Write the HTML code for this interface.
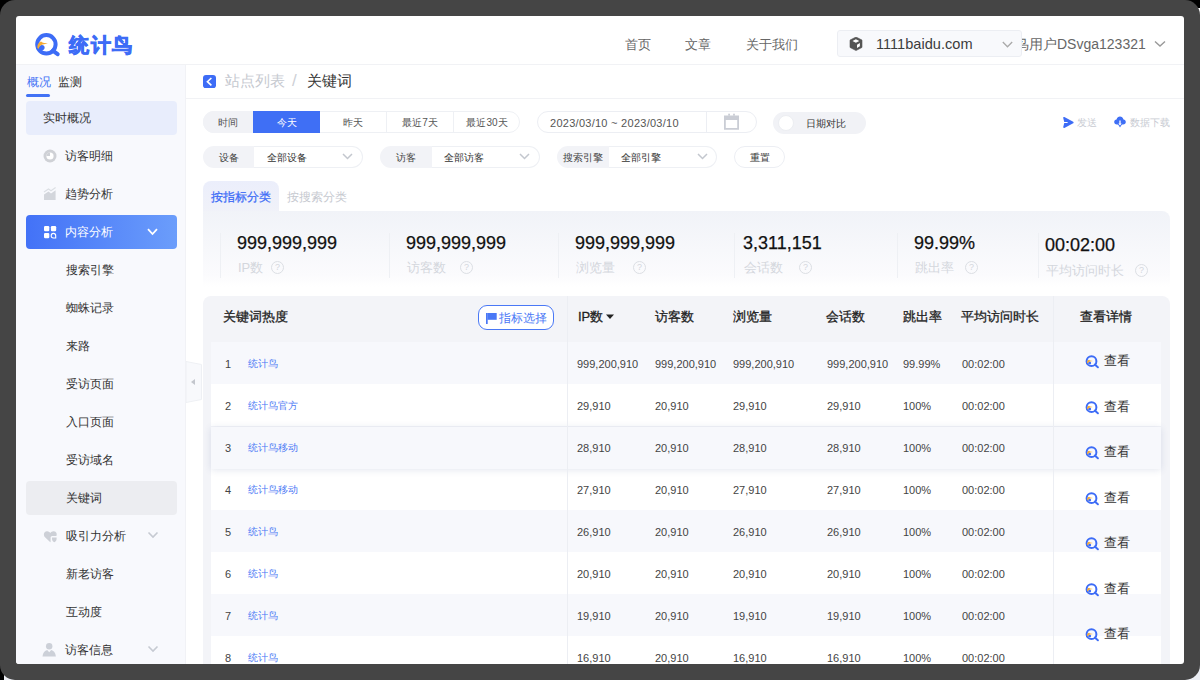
<!DOCTYPE html>
<html><head><meta charset="utf-8">
<style>
*{box-sizing:border-box;margin:0;padding:0}
html,body{width:1200px;height:680px;overflow:hidden;background:#000}
body{font-family:"Liberation Sans",sans-serif;color:#333;position:relative}
.a{position:absolute;white-space:nowrap}
#frame{position:absolute;left:0;top:0;width:1200px;height:680px;background:#454545;border-radius:15px}
#page{position:absolute;left:0;top:0;width:1200px;height:680px;clip-path:inset(16px round 3px);background:#fff}
.hline{position:absolute;height:1px;background:#f0f1f5}
.vline{position:absolute;width:1px;background:#eef0f4;z-index:2}
.nav{font-size:13px;color:#666;line-height:16px;top:37px}
.si{left:26px;width:151px;height:34px;border-radius:4px}
.st{font-size:12px;color:#333;line-height:16px}
.ico{position:absolute}
.seg{font-size:10px;line-height:23px;text-align:center;color:#555;top:111px;height:22px}
.lbl{font-size:10px;line-height:23px;color:#444;text-align:center;background:#f2f3f7;top:146px;height:22px}
.sel{font-size:11px;line-height:19px;color:#333;top:146px;height:22px;border:1px solid #eef0f4;border-left:none;border-radius:0 11px 11px 0;background:#fff}
.num{font-size:18px;line-height:20px;color:#111;top:233px;-webkit-text-stroke:0.25px #111}
.slab{font-size:13px;line-height:16px;color:#d4d7dd;top:260px}
.q{width:13px;height:13px;border:1px solid #dcdfe4;border-radius:50%;font-size:9px;line-height:11px;text-align:center;color:#d4d7dd}
.th{font-size:13px;line-height:18px;color:#222;top:308px;-webkit-text-stroke:0.3px #222}
.row{left:211px;width:950px;height:42px}
.td{font-size:11px;line-height:14px;color:#444}
.kw{color:#4d7af5}
.view{font-size:12.5px;line-height:16px;color:#333}
</style></head><body>
<div class="a" style="left:0;top:0;width:1200px;height:680px;background:#eceef4"></div><div class="a" style="left:0;top:0;width:24px;height:24px;background:#000"></div><div class="a" style="left:1176px;top:0;width:24px;height:8px;background:#000"></div><div class="a" style="left:1176px;top:8px;width:24px;height:16px;background:#fff"></div><div class="a" style="left:0;top:656px;width:4px;height:24px;background:#000"></div>
<div id="frame"></div>
<div id="page">
  <!-- header -->
  <div class="hline" style="left:16px;top:64px;width:1168px;background:#f1f2f5"></div>
  <svg class="ico" style="left:34px;top:32px" width="26" height="26" viewBox="0 0 26 26">
    <circle cx="12.4" cy="12.3" r="9.2" fill="none" stroke="#3d6cf6" stroke-width="4"/>
    <path d="M18.8 18.6 L23.6 22.2" stroke="#3d6cf6" stroke-width="4" stroke-linecap="round"/>
    <circle cx="7.9" cy="15.6" r="2.7" fill="#3d6cf6"/>
    <path d="M3.3 15.8 C3.2 12.6 4.6 10.2 7 9.6 L9 10.8 L14 11.4 L8.6 12.4 C6.8 12.8 5.4 14 4.4 17Z" fill="#f6ab35"/>
  </svg>
  <div class="a" style="left:69px;top:32px;font-size:20px;line-height:26px;font-weight:700;color:#3d6cf6;-webkit-text-stroke:0.8px #3d6cf6;letter-spacing:1.5px">统计鸟</div>
  <div class="a nav" style="left:625px">首页</div>
  <div class="a nav" style="left:685px">文章</div>
  <div class="a nav" style="left:746px">关于我们</div>
  <div class="a" style="left:1015px;top:36px;font-size:14px;line-height:16px;color:#666">鸟用户DSvga123321</div>
  <svg class="ico" style="left:1154px;top:40px" width="12" height="8" viewBox="0 0 12 8"><path d="M1 1.5 L6 6 L11 1.5" fill="none" stroke="#999" stroke-width="1.4"/></svg>
  <div class="a" style="left:837px;top:30px;width:185px;height:27px;border:1px solid #eceef3;border-radius:3px;background:#f8f9fc"></div>
  <svg class="ico" style="left:849px;top:37px" width="14" height="14" viewBox="0 0 14 14"><path d="M7 0 L13 3.1 L13 10.4 L7 13.6 L1 10.4 L1 3.1Z" fill="#555" stroke="#555" stroke-width="0.6" stroke-linejoin="round"/><path d="M6.9 2.2 L10.3 4 L6.9 5.8 L3.5 4Z" fill="#fff"/><path d="M8 7.7 L10.9 6.1 L10.9 9.3 L8 10.9Z" fill="#fff"/></svg>
  <div class="a" style="left:876px;top:35px;font-size:14.6px;line-height:18px;color:#3c3c3c">1111baidu.com</div>
  <svg class="ico" style="left:1002px;top:41px" width="11" height="7" viewBox="0 0 11 7"><path d="M0.8 1 L5.5 5.8 L10.2 1" fill="none" stroke="#aaa" stroke-width="1.3"/></svg>

  <!-- sidebar -->
  <div class="a" style="left:16px;top:65px;width:170px;height:600px;background:#f8f9fd;border-right:1px solid #f1f2f6"></div>
  <div class="a" style="left:27px;top:74px;font-size:12px;line-height:16px;color:#4272f5">概况</div>
  <div class="a" style="left:58px;top:74px;font-size:12px;line-height:16px;color:#333">监测</div>
  <div class="a" style="left:26px;top:94px;width:24px;height:2.5px;border-radius:2px;background:#4272f5"></div>
  <div class="a si" style="top:101px;background:#e8edfc"></div>
  <div class="a st" style="left:43px;top:110px">实时概况</div>
  <svg class="ico" style="left:43px;top:149px" width="14" height="14" viewBox="0 0 14 14"><circle cx="7" cy="7" r="6.5" fill="#cfd1d6"/><circle cx="7" cy="7" r="3.6" fill="#fff"/><path d="M7 3.4 A3.6 3.6 0 0 0 3.4 7 L7 7Z" fill="#cfd1d6"/></svg>
  <div class="a st" style="left:65px;top:148px">访客明细</div>
  <svg class="ico" style="left:43px;top:187px" width="14" height="14" viewBox="0 0 14 14"><path d="M1 7.6 L5.5 4.6 L8 6.4 L12.6 3.2 L12.6 13 L1 13Z" fill="#d3d6dc"/><path d="M1 5 L5.5 2 L8 3.8 L12.6 0.6" fill="none" stroke="#dcdfe4" stroke-width="1.2"/></svg>
  <div class="a st" style="left:65px;top:186px">趋势分析</div>
  <div class="a si" style="top:215px;background:linear-gradient(90deg,#4372f7,#6b9dfb)"></div>
  <svg class="ico" style="left:44px;top:226px" width="13" height="13" viewBox="0 0 13 13"><rect x="0" y="0" width="5.3" height="5.3" rx="1.2" fill="#fff"/><rect x="6.9" y="0" width="5.3" height="5.3" rx="1.2" fill="#fff"/><rect x="0" y="6.9" width="5.3" height="5.3" rx="1.2" fill="#fff"/><path d="M9.4 7.4 C10.9 7.4 11.7 8.2 11.7 9.7 L11.7 12 L9.4 12 C7.9 12 7.2 11.2 7.2 9.7 C7.2 8.2 7.9 7.4 9.4 7.4Z" fill="none" stroke="#fff" stroke-width="1.1"/></svg>
  <div class="a st" style="left:65px;top:224px;color:#fff">内容分析</div>
  <svg class="ico" style="left:147px;top:228px" width="11" height="8" viewBox="0 0 11 8"><path d="M1 1.2 L5.5 6 L10 1.2" fill="none" stroke="#fff" stroke-width="1.8"/></svg>
  <div class="a st" style="left:66px;top:262px">搜索引擎</div>
  <div class="a st" style="left:66px;top:300px">蜘蛛记录</div>
  <div class="a st" style="left:66px;top:338px">来路</div>
  <div class="a st" style="left:66px;top:376px">受访页面</div>
  <div class="a st" style="left:66px;top:414px">入口页面</div>
  <div class="a st" style="left:66px;top:452px">受访域名</div>
  <div class="a si" style="top:481px;background:#ecedf1"></div>
  <div class="a st" style="left:66px;top:490px">关键词</div>
  <svg class="ico" style="left:43px;top:530px" width="15" height="13" viewBox="0 0 15 13"><path d="M7.3 12.3 L2 7.2 C0.2 5.4 0.6 1.5 3.9 1.3 C5.4 1.2 6.5 2 7.3 3 C8.1 2 9.2 1.2 10.7 1.3 C13.7 1.5 14.2 4.3 13.4 6 L9.3 6 C8.2 6 7.6 6.8 7.6 7.8 L7.6 12Z" fill="#cdd0d7"/><path d="M9 7.5 L13.6 7.5 L13.6 9 C13.6 10.5 12.5 11.5 11.3 12.3 C10.1 11.5 9 10.5 9 9Z" fill="#cdd0d7"/></svg>
  <div class="a st" style="left:66px;top:528px">吸引力分析</div>
  <svg class="ico" style="left:147px;top:531px" width="12" height="8" viewBox="0 0 12 8"><path d="M1.5 1.5 L6 6 L10.5 1.5" fill="none" stroke="#c6cad2" stroke-width="1.6"/></svg>
  <div class="a st" style="left:66px;top:566px">新老访客</div>
  <div class="a st" style="left:66px;top:604px">互动度</div>
  <svg class="ico" style="left:42px;top:642px" width="15" height="15" viewBox="0 0 15 15"><circle cx="7.2" cy="4.2" r="3.2" fill="#ccd0d8"/><path d="M0.5 14.4 C0.8 11 2.8 8.6 5.2 8.1 L7.2 10.3 L9.2 8.1 C11.6 8.6 13.6 11 13.9 14.4Z" fill="#ccd0d8"/></svg>
  <div class="a st" style="left:65px;top:642px">访客信息</div>
  <svg class="ico" style="left:147px;top:645px" width="12" height="8" viewBox="0 0 12 8"><path d="M1.5 1.5 L6 6 L10.5 1.5" fill="none" stroke="#c6cad2" stroke-width="1.6"/></svg>
  <!-- collapse handle -->
  <svg class="ico" style="left:186px;top:361px" width="16" height="42" viewBox="0 0 16 42"><path d="M0 0.5 L15.5 3.5 L15.5 38.5 L0 41.5Z" fill="#f8f9fc" stroke="#eef0f4" stroke-width="1"/><path d="M9 18 L5 21 L9 24Z" fill="#c3c6cd"/></svg>

  <!-- breadcrumb -->
  <div class="hline" style="left:186px;top:97.5px;width:998px;background:#f1f2f5"></div>
  <svg class="ico" style="left:203px;top:75px" width="13" height="13" viewBox="0 0 13 13"><rect width="13" height="13.3" rx="3" fill="#3d6cf6"/><path d="M8.4 3 L4.4 6.7 L8.4 10.4" fill="none" stroke="#fff" stroke-width="1.6"/></svg>
  <div class="a" style="left:225px;top:72px;font-size:15px;line-height:18px;color:#c6c9d0">站点列表</div>
  <div class="a" style="left:292px;top:71px;font-size:17px;line-height:20px;color:#cdd0d6">/</div>
  <div class="a" style="left:307px;top:72px;font-size:15px;line-height:18px;color:#333">关键词</div>

  <!-- filter row 1 -->
  <div class="a" style="left:203px;top:111px;width:317px;height:22px;border:1px solid #eef0f4;border-radius:11px;background:#fff"></div>
  <div class="a seg" style="left:203px;width:50px;background:#f1f2f6;border-radius:11px 0 0 11px">时间</div>
  <div class="a seg" style="left:253px;width:67px;background:#3f6ff5;color:#fff">今天</div>
  <div class="a seg" style="left:320px;width:67px;border-right:1px solid #eef0f4">昨天</div>
  <div class="a seg" style="left:387px;width:67px;border-right:1px solid #eef0f4">最近7天</div>
  <div class="a seg" style="left:454px;width:66px">最近30天</div>
  <div class="a" style="left:537px;top:111px;width:220px;height:22px;border:1px solid #eceef3;border-radius:11px;background:#fff"></div>
  <div class="a" style="left:550px;top:115.5px;font-size:11px;letter-spacing:0.27px;line-height:14px;color:#555">2023/03/10 ~ 2023/03/10</div>
  <div class="vline" style="left:706px;top:112px;height:20px;background:#eceef3"></div>
  <svg class="ico" style="left:723px;top:113px" width="17" height="17" viewBox="0 0 17 17"><path fill-rule="evenodd" d="M1 2.5 L16 2.5 L16 16.8 L1 16.8Z M2.8 7 L2.8 15 L14.2 15 L14.2 7Z" fill="#cacdd5"/><rect x="5.2" y="0.7" width="1.8" height="2" fill="#cacdd5"/><rect x="10.1" y="0.7" width="1.8" height="2" fill="#cacdd5"/></svg>
  <div class="a" style="left:773px;top:112px;width:93px;height:22px;border-radius:11px;background:#f1f2f6"></div>
  <div class="a" style="left:777.5px;top:115px;width:16px;height:16px;border-radius:50%;background:#fff;border:1px solid #eceef2"></div>
  <div class="a" style="left:806px;top:117px;font-size:10px;line-height:14px;color:#333">日期对比</div>
  <svg class="ico" style="left:1062px;top:116px" width="13" height="13" viewBox="0 0 13 13"><path d="M2 1.8 L10.8 6.5 L2 11.2 L3.2 6.5Z" fill="#3d6cf6" stroke="#3d6cf6" stroke-width="1.6" stroke-linejoin="round"/><path d="M1 6.5 L5.6 6.5" stroke="#fff" stroke-width="1.1"/></svg>
  <div class="a" style="left:1077px;top:116px;font-size:10px;line-height:13px;color:#c9ccd3">发送</div>
  <svg class="ico" style="left:1114px;top:116px" width="12" height="12" viewBox="0 0 12 12"><path d="M3 8.5 C1.2 8.5 0.2 7.3 0.2 6 C0.2 4.7 1.2 3.7 2.5 3.6 C3 1.7 4.4 0.6 6 0.6 C7.6 0.6 9 1.7 9.5 3.6 C10.8 3.7 11.8 4.7 11.8 6 C11.8 7.3 10.8 8.5 9 8.5Z" fill="#3f6ff5"/><path d="M6 4.5 L6 9" stroke="#fff" stroke-width="1.3"/><path d="M3.8 8 L6 11.5 L8.2 8Z" fill="#3f6ff5"/><path d="M4.3 7.5 L6 9.6 L7.7 7.5Z" fill="#fff"/></svg>
  <div class="a" style="left:1130px;top:116px;font-size:10px;line-height:13px;color:#c9ccd3">数据下载</div>

  <!-- filter row 2 -->
  <div class="a lbl" style="left:203px;width:51px;border-radius:11px 0 0 11px">设备</div>
  <div class="a sel" style="left:254px;width:109px"></div>
  <div class="a" style="left:267px;top:151px;font-size:10px;line-height:14px;color:#333">全部设备</div>
  <svg class="ico" style="left:342px;top:153px" width="11" height="7" viewBox="0 0 11 7"><path d="M1 1 L5.5 5.5 L10 1" fill="none" stroke="#c3c7ce" stroke-width="1.5"/></svg>
  <div class="a lbl" style="left:380px;width:52px;border-radius:11px 0 0 11px">访客</div>
  <div class="a sel" style="left:432px;width:108px"></div>
  <div class="a" style="left:444px;top:151px;font-size:10px;line-height:14px;color:#333">全部访客</div>
  <svg class="ico" style="left:519px;top:153px" width="11" height="7" viewBox="0 0 11 7"><path d="M1 1 L5.5 5.5 L10 1" fill="none" stroke="#c3c7ce" stroke-width="1.5"/></svg>
  <div class="a lbl" style="left:557px;width:52px;border-radius:11px 0 0 11px">搜索引擎</div>
  <div class="a sel" style="left:609px;width:108px"></div>
  <div class="a" style="left:621px;top:151px;font-size:10px;line-height:14px;color:#333">全部引擎</div>
  <svg class="ico" style="left:697px;top:153px" width="11" height="7" viewBox="0 0 11 7"><path d="M1 1 L5.5 5.5 L10 1" fill="none" stroke="#c3c7ce" stroke-width="1.5"/></svg>
  <div class="a" style="left:734px;top:146px;width:51px;height:22px;border:1px solid #eceef3;border-radius:11px;background:#fff;font-size:10px;line-height:21px;text-align:center;color:#333">重置</div>

  <!-- tabs -->
  <div class="a" style="left:203px;top:181px;width:76px;height:40px;border-radius:8px 8px 0 0;background:linear-gradient(180deg,#ebeefb,#f2f3f8)"></div>
  <div class="a" style="left:211px;top:189px;font-size:12px;line-height:16px;color:#3d6cf6;-webkit-text-stroke:0.25px #3d6cf6">按指标分类</div>
  <div class="a" style="left:287px;top:189px;font-size:12px;line-height:16px;color:#c6c9d0">按搜索分类</div>

  <!-- stats -->
  <div class="a" style="left:203px;top:211px;width:967px;height:76px;border-radius:0 8px 0 0;background:linear-gradient(180deg,#f1f3f8,#fbfbfd 85%,#fff)"></div>
  <div class="vline" style="left:220px;top:233px;height:45px"></div>
  <div class="vline" style="left:389px;top:233px;height:45px"></div>
  <div class="vline" style="left:558px;top:233px;height:45px"></div>
  <div class="vline" style="left:734px;top:233px;height:45px"></div>
  <div class="vline" style="left:897px;top:233px;height:45px"></div>
  <div class="vline" style="left:1038px;top:233px;height:45px"></div>
  <div class="a num" style="left:237px">999,999,999</div>
  <div class="a num" style="left:406px">999,999,999</div>
  <div class="a num" style="left:575px">999,999,999</div>
  <div class="a num" style="left:743px">3,311,151</div>
  <div class="a num" style="left:914px">99.99%</div>
  <div class="a num" style="left:1045px;top:235px">00:02:00</div>
  <div class="a slab" style="left:238px">IP数</div><div class="a q" style="left:271px;top:261px">?</div>
  <div class="a slab" style="left:407px">访客数</div><div class="a q" style="left:460px;top:261px">?</div>
  <div class="a slab" style="left:576px">浏览量</div><div class="a q" style="left:633px;top:261px">?</div>
  <div class="a slab" style="left:744px">会话数</div><div class="a q" style="left:799px;top:261px">?</div>
  <div class="a slab" style="left:915px">跳出率</div><div class="a q" style="left:965px;top:261px">?</div>
  <div class="a slab" style="left:1046px;top:263px">平均访问时长</div><div class="a q" style="left:1135px;top:264px">?</div>

  <!-- table -->
  <div class="a" style="left:203px;top:296px;width:967px;height:400px;border-radius:8px;background:#f3f4f8"></div>
  <div class="a th" style="left:223px">关键词热度</div>
  <div class="a" style="left:478px;top:305px;width:76px;height:25px;border:1px solid #4a78f6;border-radius:9px;background:#fff"></div>
  <svg class="ico" style="left:486px;top:313px" width="11" height="11" viewBox="0 0 11 11"><rect x="0" y="0" width="1.7" height="11" fill="#4a78f6"/><path d="M1.5 0 L10.7 0 L10.7 6.8 L1.5 6.8Z" fill="#4a78f6"/></svg>
  <div class="a" style="left:499px;top:310px;font-size:12px;line-height:16px;color:#4a78f6">指标选择</div>
  <div class="vline" style="left:567px;top:296px;height:370px;background:#eceef3"></div>
  <div class="vline" style="left:1053px;top:296px;height:370px;background:#eceef3"></div>
  <div class="a th" style="left:578px">IP数</div>
  <svg class="ico" style="left:606px;top:314px" width="8" height="6" viewBox="0 0 8 6"><path d="M0 0.5 L8 0.5 L4 5Z" fill="#222"/></svg>
  <div class="a th" style="left:655px">访客数</div>
  <div class="a th" style="left:733px">浏览量</div>
  <div class="a th" style="left:826px">会话数</div>
  <div class="a th" style="left:903px">跳出率</div>
  <div class="a th" style="left:961px">平均访问时长</div>
  <div class="a th" style="left:1080px">查看详情</div>

  <!--ROWS-->
<div class="a row" style="top:342px;background:#f7f8fc"></div>
<div class="a row" style="top:384px;background:#fff"></div>
<div class="a row" style="top:468px;background:#fff"></div>
<div class="a row" style="top:510px;background:#f7f8fc"></div>
<div class="a row" style="top:552px;background:#fff"></div>
<div class="a row" style="top:594px;background:#f7f8fc"></div>
<div class="a row" style="top:636px;background:#fff"></div>
<div class="a row" style="top:426px;background:#f7f8fc;box-shadow:0 1px 7px rgba(40,60,130,0.13);margin-top:1px"></div>
<div class="a td" style="left:225px;top:357px">1</div>
<div class="a td kw" style="left:248px;top:357px;font-size:10px">统计鸟</div>
<div class="a td" style="left:577px;top:357px">999,200,910</div>
<div class="a td" style="left:655px;top:357px">999,200,910</div>
<div class="a td" style="left:733px;top:357px">999,200,910</div>
<div class="a td" style="left:827px;top:357px">999,200,910</div>
<div class="a td" style="left:903px;top:357px">99.99%</div>
<div class="a td" style="left:962px;top:357px">00:02:00</div>
<div class="a td" style="left:225px;top:399px">2</div>
<div class="a td kw" style="left:248px;top:399px;font-size:10px">统计鸟官方</div>
<div class="a td" style="left:577px;top:399px">29,910</div>
<div class="a td" style="left:655px;top:399px">20,910</div>
<div class="a td" style="left:733px;top:399px">29,910</div>
<div class="a td" style="left:827px;top:399px">29,910</div>
<div class="a td" style="left:903px;top:399px">100%</div>
<div class="a td" style="left:962px;top:399px">00:02:00</div>
<div class="a td" style="left:225px;top:441px">3</div>
<div class="a td kw" style="left:248px;top:441px;font-size:10px">统计鸟移动</div>
<div class="a td" style="left:577px;top:441px">28,910</div>
<div class="a td" style="left:655px;top:441px">20,910</div>
<div class="a td" style="left:733px;top:441px">28,910</div>
<div class="a td" style="left:827px;top:441px">28,910</div>
<div class="a td" style="left:903px;top:441px">100%</div>
<div class="a td" style="left:962px;top:441px">00:02:00</div>
<div class="a td" style="left:225px;top:483px">4</div>
<div class="a td kw" style="left:248px;top:483px;font-size:10px">统计鸟移动</div>
<div class="a td" style="left:577px;top:483px">27,910</div>
<div class="a td" style="left:655px;top:483px">20,910</div>
<div class="a td" style="left:733px;top:483px">27,910</div>
<div class="a td" style="left:827px;top:483px">27,910</div>
<div class="a td" style="left:903px;top:483px">100%</div>
<div class="a td" style="left:962px;top:483px">00:02:00</div>
<div class="a td" style="left:225px;top:525px">5</div>
<div class="a td kw" style="left:248px;top:525px;font-size:10px">统计鸟</div>
<div class="a td" style="left:577px;top:525px">26,910</div>
<div class="a td" style="left:655px;top:525px">20,910</div>
<div class="a td" style="left:733px;top:525px">26,910</div>
<div class="a td" style="left:827px;top:525px">26,910</div>
<div class="a td" style="left:903px;top:525px">100%</div>
<div class="a td" style="left:962px;top:525px">00:02:00</div>
<div class="a td" style="left:225px;top:567px">6</div>
<div class="a td kw" style="left:248px;top:567px;font-size:10px">统计鸟</div>
<div class="a td" style="left:577px;top:567px">20,910</div>
<div class="a td" style="left:655px;top:567px">20,910</div>
<div class="a td" style="left:733px;top:567px">20,910</div>
<div class="a td" style="left:827px;top:567px">20,910</div>
<div class="a td" style="left:903px;top:567px">100%</div>
<div class="a td" style="left:962px;top:567px">00:02:00</div>
<div class="a td" style="left:225px;top:609px">7</div>
<div class="a td kw" style="left:248px;top:609px;font-size:10px">统计鸟</div>
<div class="a td" style="left:577px;top:609px">19,910</div>
<div class="a td" style="left:655px;top:609px">20,910</div>
<div class="a td" style="left:733px;top:609px">19,910</div>
<div class="a td" style="left:827px;top:609px">19,910</div>
<div class="a td" style="left:903px;top:609px">100%</div>
<div class="a td" style="left:962px;top:609px">00:02:00</div>
<div class="a td" style="left:225px;top:651px">8</div>
<div class="a td kw" style="left:248px;top:651px;font-size:10px">统计鸟</div>
<div class="a td" style="left:577px;top:651px">16,910</div>
<div class="a td" style="left:655px;top:651px">20,910</div>
<div class="a td" style="left:733px;top:651px">16,910</div>
<div class="a td" style="left:827px;top:651px">16,910</div>
<div class="a td" style="left:903px;top:651px">100%</div>
<div class="a td" style="left:962px;top:651px">00:02:00</div>
<svg class="ico" style="left:1085px;top:355.0px" width="15" height="14" viewBox="0 0 15 14"><circle cx="6.5" cy="6.2" r="4.9" fill="none" stroke="#3d6cf6" stroke-width="2"/><path d="M9.8 9.6 L12.9 12.3" stroke="#3d6cf6" stroke-width="2" stroke-linecap="round"/><circle cx="4.6" cy="8" r="1.5" fill="#3d6cf6"/><path d="M2 8 C2 6.2 2.8 5 4 4.8 L5.2 5.5 L8 5.9 L5 6.4 C4 6.6 3.2 7.2 2.6 8.6Z" fill="#f6ab35"/></svg>
<div class="a view" style="left:1104px;top:353.0px">查看</div>
<svg class="ico" style="left:1085px;top:400.5px" width="15" height="14" viewBox="0 0 15 14"><circle cx="6.5" cy="6.2" r="4.9" fill="none" stroke="#3d6cf6" stroke-width="2"/><path d="M9.8 9.6 L12.9 12.3" stroke="#3d6cf6" stroke-width="2" stroke-linecap="round"/><circle cx="4.6" cy="8" r="1.5" fill="#3d6cf6"/><path d="M2 8 C2 6.2 2.8 5 4 4.8 L5.2 5.5 L8 5.9 L5 6.4 C4 6.6 3.2 7.2 2.6 8.6Z" fill="#f6ab35"/></svg>
<div class="a view" style="left:1104px;top:398.5px">查看</div>
<svg class="ico" style="left:1085px;top:446.0px" width="15" height="14" viewBox="0 0 15 14"><circle cx="6.5" cy="6.2" r="4.9" fill="none" stroke="#3d6cf6" stroke-width="2"/><path d="M9.8 9.6 L12.9 12.3" stroke="#3d6cf6" stroke-width="2" stroke-linecap="round"/><circle cx="4.6" cy="8" r="1.5" fill="#3d6cf6"/><path d="M2 8 C2 6.2 2.8 5 4 4.8 L5.2 5.5 L8 5.9 L5 6.4 C4 6.6 3.2 7.2 2.6 8.6Z" fill="#f6ab35"/></svg>
<div class="a view" style="left:1104px;top:444.0px">查看</div>
<svg class="ico" style="left:1085px;top:491.5px" width="15" height="14" viewBox="0 0 15 14"><circle cx="6.5" cy="6.2" r="4.9" fill="none" stroke="#3d6cf6" stroke-width="2"/><path d="M9.8 9.6 L12.9 12.3" stroke="#3d6cf6" stroke-width="2" stroke-linecap="round"/><circle cx="4.6" cy="8" r="1.5" fill="#3d6cf6"/><path d="M2 8 C2 6.2 2.8 5 4 4.8 L5.2 5.5 L8 5.9 L5 6.4 C4 6.6 3.2 7.2 2.6 8.6Z" fill="#f6ab35"/></svg>
<div class="a view" style="left:1104px;top:489.5px">查看</div>
<svg class="ico" style="left:1085px;top:537.0px" width="15" height="14" viewBox="0 0 15 14"><circle cx="6.5" cy="6.2" r="4.9" fill="none" stroke="#3d6cf6" stroke-width="2"/><path d="M9.8 9.6 L12.9 12.3" stroke="#3d6cf6" stroke-width="2" stroke-linecap="round"/><circle cx="4.6" cy="8" r="1.5" fill="#3d6cf6"/><path d="M2 8 C2 6.2 2.8 5 4 4.8 L5.2 5.5 L8 5.9 L5 6.4 C4 6.6 3.2 7.2 2.6 8.6Z" fill="#f6ab35"/></svg>
<div class="a view" style="left:1104px;top:535.0px">查看</div>
<svg class="ico" style="left:1085px;top:582.5px" width="15" height="14" viewBox="0 0 15 14"><circle cx="6.5" cy="6.2" r="4.9" fill="none" stroke="#3d6cf6" stroke-width="2"/><path d="M9.8 9.6 L12.9 12.3" stroke="#3d6cf6" stroke-width="2" stroke-linecap="round"/><circle cx="4.6" cy="8" r="1.5" fill="#3d6cf6"/><path d="M2 8 C2 6.2 2.8 5 4 4.8 L5.2 5.5 L8 5.9 L5 6.4 C4 6.6 3.2 7.2 2.6 8.6Z" fill="#f6ab35"/></svg>
<div class="a view" style="left:1104px;top:580.5px">查看</div>
<svg class="ico" style="left:1085px;top:628.0px" width="15" height="14" viewBox="0 0 15 14"><circle cx="6.5" cy="6.2" r="4.9" fill="none" stroke="#3d6cf6" stroke-width="2"/><path d="M9.8 9.6 L12.9 12.3" stroke="#3d6cf6" stroke-width="2" stroke-linecap="round"/><circle cx="4.6" cy="8" r="1.5" fill="#3d6cf6"/><path d="M2 8 C2 6.2 2.8 5 4 4.8 L5.2 5.5 L8 5.9 L5 6.4 C4 6.6 3.2 7.2 2.6 8.6Z" fill="#f6ab35"/></svg>
<div class="a view" style="left:1104px;top:626.0px">查看</div>
<svg class="ico" style="left:1085px;top:673.5px" width="15" height="14" viewBox="0 0 15 14"><circle cx="6.5" cy="6.2" r="4.9" fill="none" stroke="#3d6cf6" stroke-width="2"/><path d="M9.8 9.6 L12.9 12.3" stroke="#3d6cf6" stroke-width="2" stroke-linecap="round"/><circle cx="4.6" cy="8" r="1.5" fill="#3d6cf6"/><path d="M2 8 C2 6.2 2.8 5 4 4.8 L5.2 5.5 L8 5.9 L5 6.4 C4 6.6 3.2 7.2 2.6 8.6Z" fill="#f6ab35"/></svg>
<div class="a view" style="left:1104px;top:671.5px">查看</div>
<!--/ROWS-->
</div>
</body></html>
